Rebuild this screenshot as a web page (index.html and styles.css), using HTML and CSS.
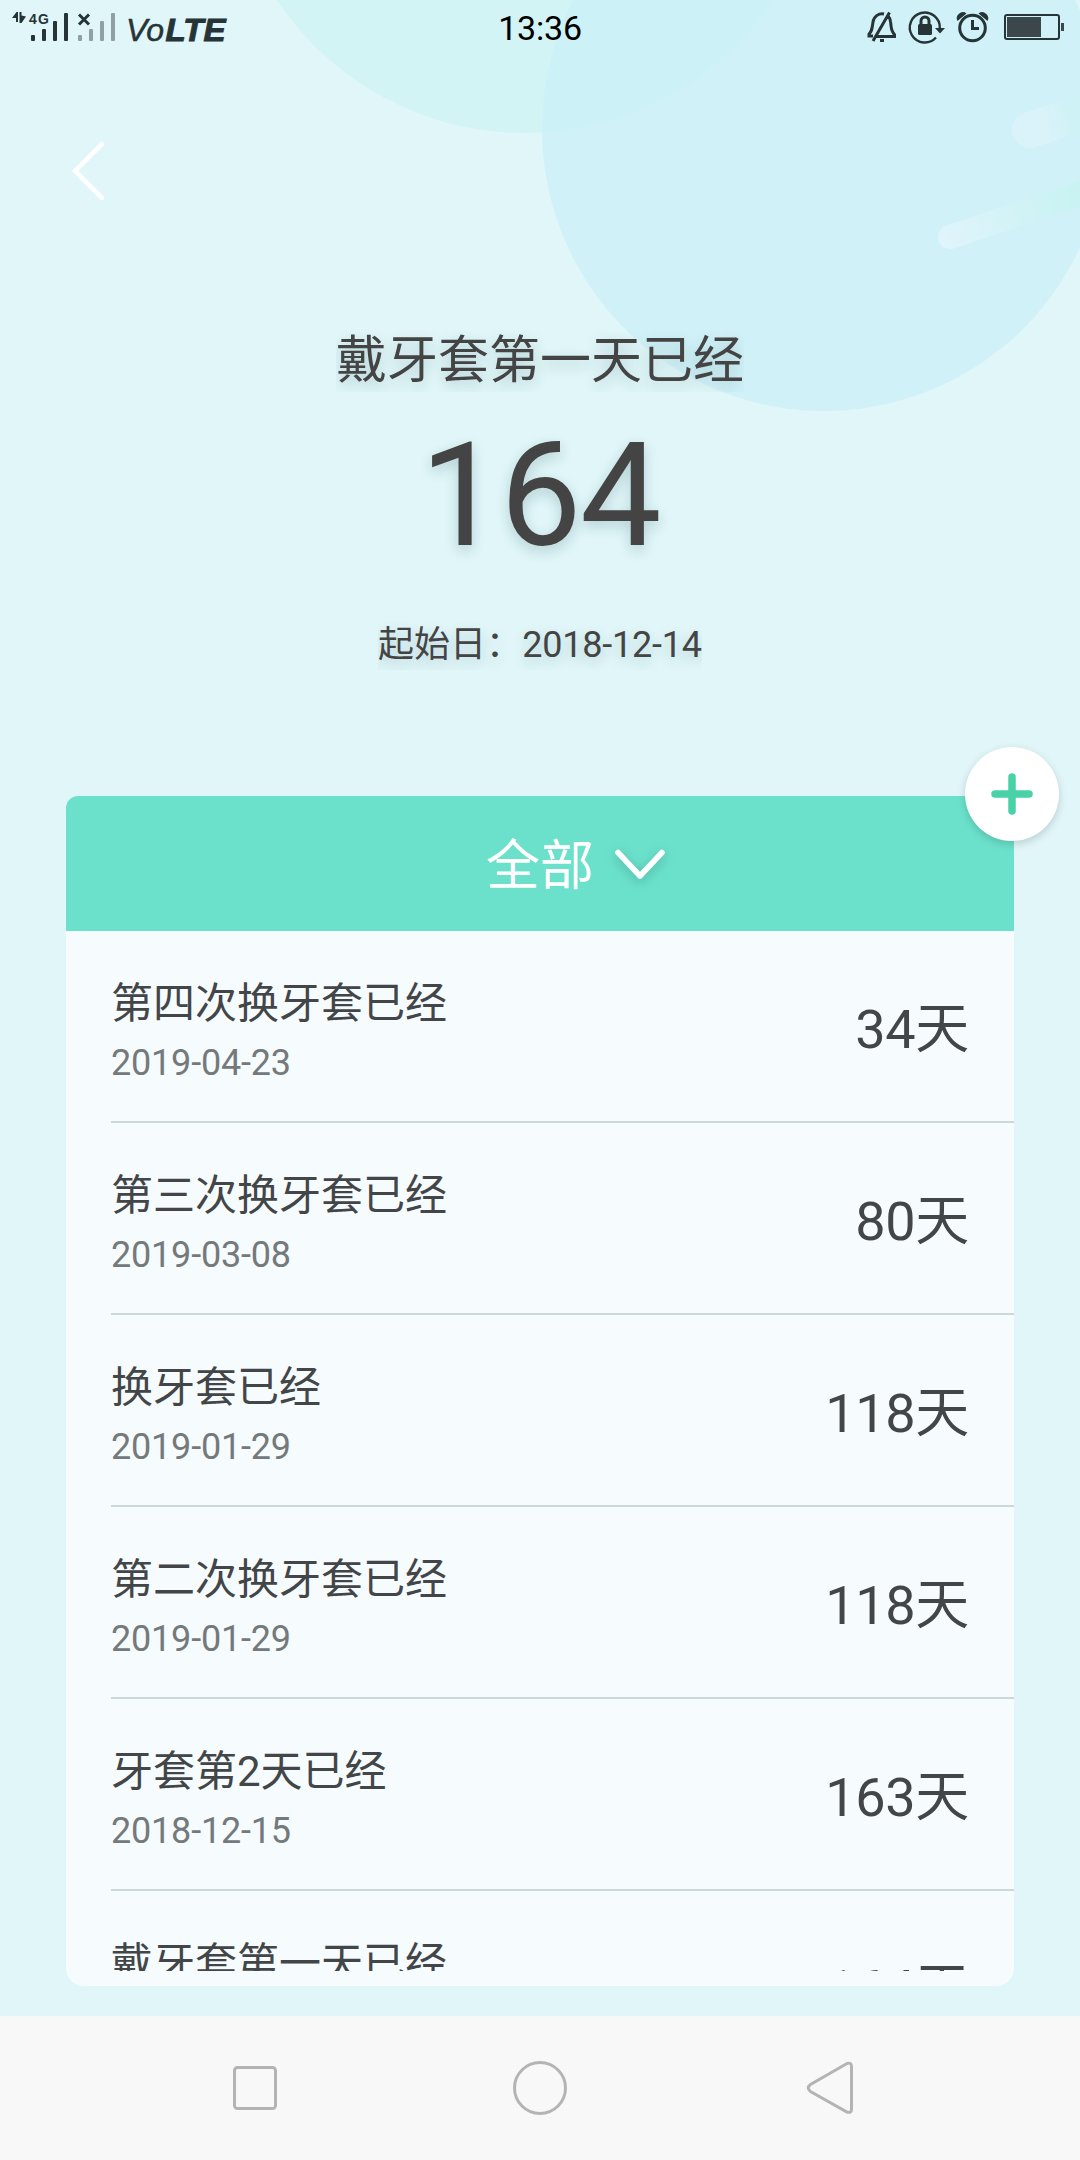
FILE: index.html
```html
<!DOCTYPE html>
<html lang="zh-CN">
<head>
    <meta charset="UTF-8">
    <meta name="viewport" content="width=device-width, initial-scale=1.0">
    <title>倒数日</title>
    <link rel="stylesheet" href="styles.css">
</head>
<body>
    <svg class="backdrop" viewBox="0 0 1080 430">
        <defs>
            <linearGradient id="streak" x1="0" x2="1" y1="0" y2="0">
                <stop offset="0" stop-color="#e0f4fb"/>
                <stop offset="0.5" stop-color="#d2f3f6"/>
                <stop offset="0.85" stop-color="#c8f3f2"/>
            </linearGradient>
            <linearGradient id="streakShort" x1="0" x2="1" y1="0" y2="0">
                <stop offset="0" stop-color="#daf3fa"/>
                <stop offset="0.3" stop-color="#daf3f9"/>
                <stop offset="0.55" stop-color="#cff2f7"/>
            </linearGradient>
        </defs>
        <circle cx="525" cy="-165" r="298" fill="#d2f4f5"/>
        <circle cx="824" cy="129" r="282" fill="#c9f0f8" fill-opacity="0.7"/>
        <rect x="1012" y="112" width="110" height="36" rx="18" fill="url(#streakShort)" transform="rotate(-18 1030 130)"/>
        <rect x="938" y="225" width="170" height="24" rx="12" fill="url(#streak)" transform="rotate(-18.500 950 237)"/>
    </svg>

    <header class="status-bar">
        <svg class="status-left" viewBox="0 0 260 60">
            <g fill="#263437">
                <path d="M12 18l4.500-6H18v10h-2v-4zM19.500 12h2v3.500l4.500 1-4.500 6.500h-2z"/>
                <text class="net" x="29" y="24" textLength="20">4G</text>
                <rect x="31" y="35" width="4" height="6" rx="1"/>
                <rect x="42" y="29" width="4" height="12" rx="1"/>
                <rect x="53" y="21" width="4" height="20" rx="1"/>
                <rect x="64" y="13" width="4" height="28" rx="1"/>
            </g>
            <path d="M79 14.500l10 10M89 14.500l-10 10" stroke="#263437" stroke-width="3"/>
            <g fill="#90a0a4">
                <rect x="78" y="35" width="4" height="6" rx="1"/>
                <rect x="89" y="29" width="4" height="12" rx="1"/>
                <rect x="100" y="21" width="4" height="20" rx="1"/>
                <rect x="111" y="13" width="4" height="28" rx="1"/>
            </g>
            <text class="volte" x="126" y="41" textLength="38" lengthAdjust="spacingAndGlyphs">Vo</text>
            <text class="volte volte-bold" x="165.500" y="41" textLength="60" lengthAdjust="spacingAndGlyphs">LTE</text>
        </svg>
        <span class="clock">13:36</span>
        <svg class="status-right" viewBox="0 0 240 60" fill="none" stroke="#263437" stroke-width="3">
            <!-- muted bell -->
            <path d="M44 14c-5-1-10 2-11 8-1 7-1 9-4 12v2h4M36 36.500h18.500v-2c-4-4-3-7-4-13-.4-3-1-4-2-5M49.500 12.500L33 41"/>
            <path d="M40 40.500h4" stroke-width="3"/>
            <!-- rotation lock -->
            <path d="M96 37.500A15 15 0 1 1 99.800 28" stroke-width="2.400"/>
            <path d="M95 28h10l-5 5.500z" fill="#263437" stroke="none"/>
            <rect x="78" y="24" width="14" height="11" rx="1.500" fill="#263437" stroke="none"/>
            <path d="M81 25v-4a4 4 0 0 1 8 0v4"/>
            <!-- alarm -->
            <circle cx="132.500" cy="28" r="12.800"/>
            <path d="M132.500 20v8.500h6.500"/>
            <path d="M117.500 21a6 6 0 0 1 9-7.500zM147.500 21a6 6 0 0 0-9-7.500z" fill="#263437" stroke="none"/>
            <!-- battery -->
            <rect x="165" y="15" width="54" height="24" rx="2" stroke-width="2"/>
            <path d="M167 17h34v20h-34zM221 23h3v8h-3z" fill="#3b474a" stroke="none"/>
        </svg>
    </header>

    <nav class="top-nav">
        <svg class="back" viewBox="0 0 40 64">
            <path d="M32 5L5 32l27 27"/>
        </svg>
    </nav>

    <section class="hero">
        <h1 class="hero-title">戴牙套第一天已经</h1>
        <p class="hero-count">164</p>
        <p class="hero-date">起始日：<span class="digits">2018-12-14</span></p>
    </section>

    <main class="panel">
        <div class="panel-header">
            <span class="panel-filter">全部</span>
            <svg class="chevron" viewBox="0 0 60 50">
                <path d="M9 12.500l22 23.500 22-23.500"/>
            </svg>
        </div>
        <button class="add-button">
            <svg viewBox="0 0 42 42"><path d="M21 4v34M4 21h34"/></svg>
        </button>
        <ul class="day-list">
            <li class="day-item">
                <div>
                    <h2 class="day-title">第四次换牙套已经</h2>
                    <p class="day-date">2019-04-23</p>
                </div>
                <span class="day-count">34天</span>
            </li>
            <li class="day-item">
                <div>
                    <h2 class="day-title">第三次换牙套已经</h2>
                    <p class="day-date">2019-03-08</p>
                </div>
                <span class="day-count">80天</span>
            </li>
            <li class="day-item">
                <div>
                    <h2 class="day-title">换牙套已经</h2>
                    <p class="day-date">2019-01-29</p>
                </div>
                <span class="day-count">118天</span>
            </li>
            <li class="day-item">
                <div>
                    <h2 class="day-title">第二次换牙套已经</h2>
                    <p class="day-date">2019-01-29</p>
                </div>
                <span class="day-count">118天</span>
            </li>
            <li class="day-item">
                <div>
                    <h2 class="day-title">牙套第2天已经</h2>
                    <p class="day-date">2018-12-15</p>
                </div>
                <span class="day-count">163天</span>
            </li>
            <li class="day-item">
                <div>
                    <h2 class="day-title">戴牙套第一天已经</h2>
                </div>
                <span class="day-count">164天</span>
            </li>
        </ul>
    </main>

    <footer class="system-nav">
        <svg viewBox="0 0 60 60"><rect x="9.500" y="9.500" width="41" height="41" rx="3"/></svg>
        <svg viewBox="0 0 60 60"><circle cx="30" cy="30" r="25.500"/></svg>
        <svg viewBox="0 0 60 60"><path d="M52 5.500L15.500 26.500Q11 30 15.500 33.500L52 54Q56.500 55.500 56.500 51V8.500Q56.500 4 52 5.500z"/></svg>
    </footer>
</body>
</html>
```
FILE: styles.css
```css
* {
    box-sizing: border-box;
}

body {
    display: flex;
    flex-direction: column;
    position: relative;
    width: 1080px;
    height: 2160px;
    margin: 0;
    overflow: hidden;
    font-family: Roboto, "Noto Sans CJK SC", sans-serif;
    background-color: #e0f6f9;
    color: #434648;
}

h1, h2, p, ul {
    margin: 0;
    padding: 0;
    font-weight: 400;
}

/* Circles behind the header */
.backdrop {
    position: absolute;
    top: 0;
    left: 0;
    z-index: -1;
    width: 1080px;
    height: 430px;
}

/* Status bar */
.status-bar {
    display: grid;
    grid-template-columns: 1fr auto 1fr;
    height: 60px;
}

.status-left {
    width: 260px;
    height: 60px;
}

.status-right {
    width: 240px;
    height: 60px;
    justify-self: end;
}

.net {
    font: 700 14px "Liberation Sans", sans-serif;
}

.volte {
    font: italic 400 32px "Liberation Sans", sans-serif;
    fill: #263437;
    stroke: #263437;
    stroke-width: 0.5;
}

.volte-bold {
    font-weight: 700;
    stroke-width: 1;
}

.clock {
    font-size: 34px;
    line-height: 57px;
    letter-spacing: -0.2px;
    color: #000;
}

/* Back arrow */
.top-nav {
    height: 162px;
    padding: 79px 0 0 70px;
}

.back {
    display: block;
    width: 40px;
    height: 64px;
    fill: none;
    stroke: #fff;
    stroke-width: 4.6;
    stroke-linecap: round;
}

/* Counter */
.hero {
    display: flex;
    flex-direction: column;
    align-items: center;
    height: 574px;
    padding-top: 107px;
    color: #444;
    text-shadow: 0 5px 14px rgba(0, 60, 60, 0.2);
}

.hero-title {
    height: 63px;
    overflow: hidden;
    font-size: 51px;
    line-height: 64px;
}

.hero-count {
    margin-top: 18px;
    font-size: 145px;
    line-height: 170px;
    letter-spacing: -1.5px;
}

.hero-date {
    height: 50px;
    margin-top: 40px;
    overflow: hidden;
    font-size: 36px;
    line-height: 50px;
}

.digits {
    letter-spacing: -0.2px;
}

/* Panel with the list */
.panel {
    display: flex;
    flex-direction: column;
    position: relative;
    height: 1190px;
    margin: 0 66px;
    padding-bottom: 15px;
    border-radius: 12px 12px 18px 18px;
    background-color: #f6fbfe;
}

.panel-header {
    display: grid;
    grid-template-columns: 1fr auto 1fr;
    align-items: center;
    flex: none;
    height: 135px;
    border-radius: 12px 0 0 0;
    background-color: #6be1cb;
}

.panel-filter {
    grid-column: 2;
    padding-bottom: 5px;
    font-size: 54px;
    color: #fff;
}

.chevron {
    width: 60px;
    height: 50px;
    margin: 3px 0 0 15px;
    overflow: visible;
    fill: none;
    stroke: #fff;
    stroke-width: 5.5;
    stroke-linecap: round;
    stroke-linejoin: round;
    filter: drop-shadow(0 3px 6px rgba(0, 70, 60, 0.3));
}

.add-button {
    display: flex;
    align-items: center;
    justify-content: center;
    position: absolute;
    top: -49.5px;
    right: -44.5px;
    width: 94px;
    height: 94px;
    padding: 0;
    border: none;
    border-radius: 50%;
    background-color: #fff;
    box-shadow: 0 3px 8px rgba(0, 0, 0, 0.16);
}

.add-button svg {
    width: 42px;
    height: 42px;
    stroke: #49d2a5;
    stroke-width: 7.5;
    stroke-linecap: round;
}

.day-list {
    flex: 1;
    min-height: 0;
    padding-left: 45px;
    overflow: hidden;
    list-style: none;
}

.day-item {
    display: flex;
    justify-content: space-between;
    height: 192px;
    padding: 42px 45px 0 0;
    border-bottom: 2px solid #ccd8da;
}

.day-title {
    font-size: 42px;
    line-height: 62px;
}

.day-date {
    font-size: 36px;
    line-height: 56px;
    letter-spacing: -0.2px;
    color: #74797b;
}

.day-count {
    margin-top: 17px;
    font-size: 54px;
    line-height: 80px;
    letter-spacing: -0.3px;
}

/* System buttons */
.system-nav {
    display: flex;
    align-items: center;
    justify-content: center;
    gap: 225px;
    height: 144px;
    margin-top: 30px;
    background-color: #f8f8f8;
}

.system-nav svg {
    width: 60px;
    height: 60px;
    fill: none;
    stroke: #b4b4b4;
    stroke-width: 3;
}
```
